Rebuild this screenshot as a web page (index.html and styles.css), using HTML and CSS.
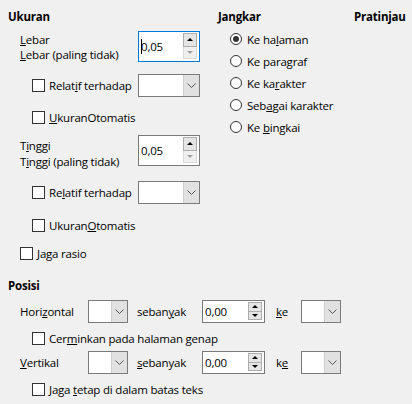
FILE: index.html
```html
<!DOCTYPE html>
<html>
<head>
<meta charset="utf-8">
<link rel="stylesheet" href="styles.css">
</head>
<body>
<div class="dlg">
  <div class="top">
    <section class="size">
      <div class="title">Ukuran</div>
      <div class="dimrow">
        <div class="dimlabels"><span><u>L</u>ebar</span><span><u>L</u>ebar (paling tidak)</span></div>
        <div class="spin spin-lg focus">
          <span class="val"><span class="caret"></span>0,05</span>
          <span class="btns"><span class="sbtn up"><i class="tri-up"></i></span><span class="sbtn down dis"><i class="tri-down"></i></span></span>
        </div>
      </div>
      <div class="relrow r1">
        <div class="chk"><span class="cb"></span><span>Relat<u>i</u>f terhadap</span></div>
        <div class="combo combo-w"><span class="field"></span><span class="cbtn"><svg width="9" height="5" viewBox="0 0 9 5"><polyline points="0.5,0.5 4.5,4.5 8.5,0.5" fill="none" stroke="#555" stroke-width="1"/></svg></span></div>
      </div>
      <div class="chkline auto1"><span class="cb"></span><span><u>U</u>kuranOtomatis</span></div>

      <div class="dimrow d2">
        <div class="dimlabels"><span>T<u>i</u>nggi</span><span>T<u>i</u>nggi (paling tidak)</span></div>
        <div class="spin spin-lg">
          <span class="val">0,05</span>
          <span class="btns"><span class="sbtn up"><i class="tri-up"></i></span><span class="sbtn down dis"><i class="tri-down"></i></span></span>
        </div>
      </div>
      <div class="relrow r2">
        <div class="chk"><span class="cb"></span><span>Re<u>l</u>atif terhadap</span></div>
        <div class="combo combo-w"><span class="field"></span><span class="cbtn"><svg width="9" height="5" viewBox="0 0 9 5"><polyline points="0.5,0.5 4.5,4.5 8.5,0.5" fill="none" stroke="#555" stroke-width="1"/></svg></span></div>
      </div>
      <div class="chkline auto2"><span class="cb"></span><span>Ukuran<u>O</u>tomatis</span></div>
      <div class="chkline keep"><span class="cb"></span><span><u>J</u>aga rasio</span></div>
    </section>

    <section class="anchor">
      <div class="title">Jangkar</div>
      <div class="radios">
        <div class="radio"><span class="rb on"></span><span>Ke ha<u>l</u>aman</span></div>
        <div class="radio"><span class="rb"></span><span>Ke para<u>g</u>raf</span></div>
        <div class="radio"><span class="rb"></span><span>Ke ka<u>r</u>akter</span></div>
        <div class="radio"><span class="rb"></span><span>Seb<u>a</u>gai karakter</span></div>
        <div class="radio"><span class="rb"></span><span>Ke <u>b</u>ingkai</span></div>
      </div>
    </section>

    <section class="preview">
      <div class="title">Pratinjau</div>
    </section>
  </div>

  <section class="pos">
    <div class="title">Posisi</div>
    <div class="prow hrow">
      <span class="plabel">Hori<u>z</u>ontal</span>
      <div class="combo combo-s"><span class="field"></span><span class="cbtn"><svg width="9" height="5" viewBox="0 0 9 5"><polyline points="0.5,0.5 4.5,4.5 8.5,0.5" fill="none" stroke="#555" stroke-width="1"/></svg></span></div>
      <span class="by">seban<u>y</u>ak</span>
      <div class="spin spin-sm">
        <span class="val">0,00</span>
        <span class="btns"><span class="sbtn up"><i class="tri-up"></i></span><span class="sbtn down"><i class="tri-down"></i></span></span>
      </div>
      <span class="ke"><u>k</u>e</span>
      <div class="combo combo-s"><span class="field"></span><span class="cbtn"><svg width="9" height="5" viewBox="0 0 9 5"><polyline points="0.5,0.5 4.5,4.5 8.5,0.5" fill="none" stroke="#555" stroke-width="1"/></svg></span></div>
    </div>
    <div class="chkline mirror"><span class="cb"></span><span>Cer<u>m</u>inkan pada halaman genap</span></div>
    <div class="prow vrow">
      <span class="plabel"><u>V</u>ertikal</span>
      <div class="combo combo-s"><span class="field"></span><span class="cbtn"><svg width="9" height="5" viewBox="0 0 9 5"><polyline points="0.5,0.5 4.5,4.5 8.5,0.5" fill="none" stroke="#555" stroke-width="1"/></svg></span></div>
      <span class="by"><u>s</u>ebanyak</span>
      <div class="spin spin-sm">
        <span class="val">0,00</span>
        <span class="btns"><span class="sbtn up"><i class="tri-up"></i></span><span class="sbtn down"><i class="tri-down"></i></span></span>
      </div>
      <span class="ke">k<u>e</u></span>
      <div class="combo combo-s"><span class="field"></span><span class="cbtn"><svg width="9" height="5" viewBox="0 0 9 5"><polyline points="0.5,0.5 4.5,4.5 8.5,0.5" fill="none" stroke="#555" stroke-width="1"/></svg></span></div>
    </div>
    <div class="chkline inside"><span class="cb"></span><span>Jaga <u>t</u>etap di dalam batas teks</span></div>
  </section>
</div>
</body>
</html>
```

FILE: styles.css
```css
* { box-sizing: border-box; }
html, body {
  margin: 0;
  padding: 0;
  background: #f0f0f0;
}
body {
  width: 412px;
  height: 404px;
  overflow: hidden;
  font-family: "Open Sans", "Noto Sans", sans-serif;
  font-size: 11.5px;
  letter-spacing: -0.2px;
  color: #000;
}
u { text-decoration: underline; text-underline-offset: 1px; }

.dlg { padding-left: 8px; }

.top { display: flex; }
.size { width: 210px; }
.anchor { width: 136px; }
.preview { flex: 1; }

.title {
  font-weight: bold;
  height: 16px;
  line-height: 16px;
  margin-top: 9px;
}

/* Dimension rows */
.dimrow {
  display: flex;
  height: 31px;
  margin-top: 6px;
  padding-left: 12px;
}
.dimlabels {
  width: 118px;
  display: flex;
  flex-direction: column;
  line-height: 15px;
  padding-top: 1px;
}
.dimrow.d2 { margin-top: 8px; }
.dimrow.d2 .dimlabels { padding-top: 3px; line-height: 16px; }

/* spin boxes */
.spin {
  position: relative;
  background: #fff;
  border: 1px solid #7a7a7a;
  display: flex;
  align-items: center;
}
.spin.focus { border-color: #0078d7; }
.spin-lg { width: 62px; height: 31px; }
.spin-sm { width: 63px; height: 23px; }
.spin .val {
  padding-left: 2px;
  display: flex;
  align-items: center;
}
.caret {
  display: inline-block;
  width: 1px;
  height: 15px;
  background: #000;
  margin-right: -1px;
}
.btns {
  position: absolute;
  right: 2px;
  top: 1px;
  bottom: 2px;
  width: 14px;
  display: flex;
  flex-direction: column;
}
.sbtn {
  flex: 1;
  display: flex;
  align-items: center;
  justify-content: center;
  background: #e5e5e5;
  border: 1px solid #adadad;
}
.sbtn.down { border-top: none; }
.sbtn.dis { background: #f0f0f0; border-color: #d9d9d9; }
.tri-up, .tri-down {
  width: 0; height: 0;
  border-left: 3px solid transparent;
  border-right: 3px solid transparent;
}
.tri-up { border-bottom: 3px solid #000; }
.tri-down { border-top: 3px solid #000; }
.dis .tri-down { border-top-color: #a0a0a0; }

/* combos */
.combo {
  display: flex;
  height: 23px;
  border: 1px solid #7a7a7a;
  background: #fff;
  flex: none;
}
.combo .field { flex: 1; }
.combo .cbtn {
  width: 16px;
  background: #e1e1e1;
  border-left: 1px solid #cfcfcf;
  display: flex;
  align-items: center;
  justify-content: center;
}
.combo-w { width: 62px; }
.combo-s { width: 40px; }

/* checkboxes */
.cb {
  display: inline-block;
  width: 13px;
  height: 13px;
  border: 1px solid #333;
  background: #fff;
  margin-right: 4px;
  flex: none;
}
.relrow {
  display: flex;
  align-items: center;
  height: 23px;
}
.relrow .chk {
  width: 130px;
  flex: none;
  padding-left: 24px;
  display: flex;
  align-items: center;
  white-space: nowrap;
}
.relrow.r1 { margin-top: 12px; }
.relrow.r2 { margin-top: 15px; }
.chkline {
  display: flex;
  align-items: center;
  height: 20px;
  padding-left: 24px;
  white-space: nowrap;
}
.chkline.auto1 { margin-top: 10px; }
.chkline.auto2 { margin-top: 11px; }
.chkline.keep { margin-top: 8px; padding-left: 12px; }

/* radios */
.radios { margin-top: 3px; padding-left: 12px; }
.radio {
  display: flex;
  align-items: center;
  height: 22px;
  white-space: nowrap;
}
.rb {
  width: 12px;
  height: 12px;
  border: 1px solid #333;
  border-radius: 50%;
  background: #fff;
  margin-right: 5px;
  display: flex;
  align-items: center;
  justify-content: center;
  flex: none;
}
.rb.on::after {
  content: "";
  width: 6px;
  height: 6px;
  border-radius: 50%;
  background: #333;
}

/* position */
.pos .title { margin-top: 15px; }
.prow {
  display: flex;
  align-items: center;
  height: 23px;
  padding-left: 12px;
  white-space: nowrap;
}
.hrow { margin-top: 6px; }
.vrow { margin-top: 3px; }
.plabel { width: 68px; flex: none; }
.by { margin-left: 9px; width: 65px; flex: none; }
.ke { margin-left: 11px; width: 25px; flex: none; }
.spin-sm { flex: none; }
.chkline.mirror { margin-top: 5px; }
.chkline.inside { margin-top: 5px; }
```
